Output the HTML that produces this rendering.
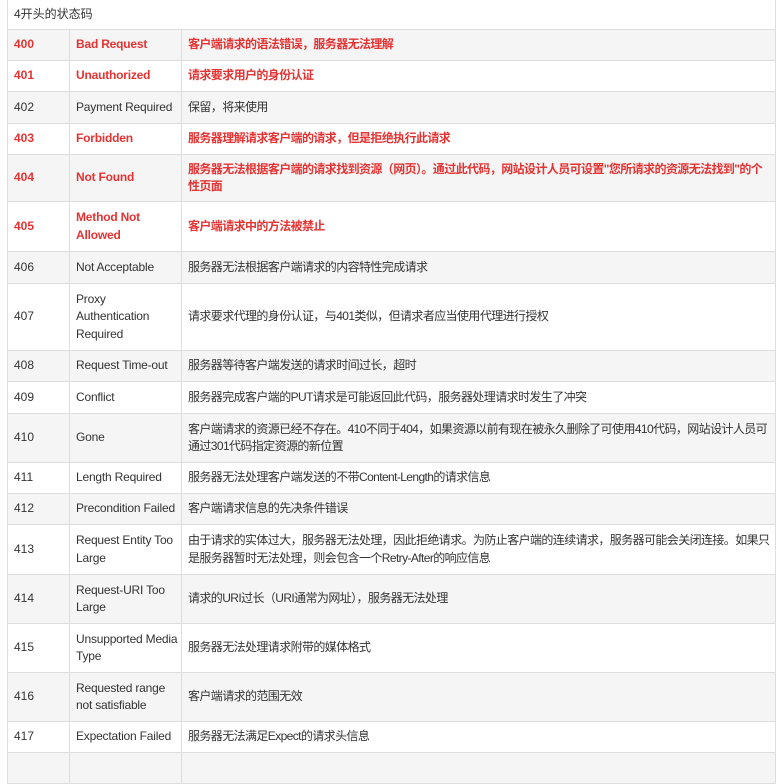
<!DOCTYPE html>
<html><head><meta charset="utf-8"><style>
body{margin:0;background:#fff;font-family:"Liberation Sans","Noto Sans CJK SC",sans-serif;font-size:12px;color:#333}
table{position:absolute;left:7px;top:-1px;width:769px;border-collapse:collapse;table-layout:fixed}
td{border:1px solid #ddd;padding:0 2px 0 6px;line-height:17.5px;vertical-align:middle;overflow:hidden;white-space:nowrap}
td:nth-child(2){letter-spacing:-0.2px}
td:nth-child(3){letter-spacing:-0.6px}
tr:nth-child(even) td{background:#f5f5f5}
tr:nth-child(odd) td{background:#fff}
.r td{color:#e53333;font-weight:bold}
</style></head><body>
<table>
<col style="width:62px"><col style="width:112px"><col>
<tr style="height:30px"><td colspan="3" style="letter-spacing:0">4开头的状态码</td></tr>
<tr class="r" style="height:31px"><td>400</td><td>Bad Request</td><td>客户端请求的语法错误，服务器无法理解</td></tr>
<tr class="r" style="height:31px"><td>401</td><td>Unauthorized</td><td>请求要求用户的身份认证</td></tr>
<tr style="height:32px"><td>402</td><td>Payment Required</td><td>保留，将来使用</td></tr>
<tr class="r" style="height:31px"><td>403</td><td>Forbidden</td><td>服务器理解请求客户端的请求，但是拒绝执行此请求</td></tr>
<tr class="r" style="height:47px"><td>404</td><td>Not Found</td><td>服务器无法根据客户端的请求找到资源（网页）。通过此代码，网站设计人员可设置"您所请求的资源无法找到"的个<br>性页面</td></tr>
<tr class="r" style="height:50px"><td>405</td><td>Method Not<br>Allowed</td><td>客户端请求中的方法被禁止</td></tr>
<tr style="height:32px"><td>406</td><td>Not Acceptable</td><td>服务器无法根据客户端请求的内容特性完成请求</td></tr>
<tr style="height:67px"><td>407</td><td>Proxy<br>Authentication<br>Required</td><td>请求要求代理的身份认证，与401类似，但请求者应当使用代理进行授权</td></tr>
<tr style="height:31px"><td>408</td><td>Request Time-out</td><td>服务器等待客户端发送的请求时间过长，超时</td></tr>
<tr style="height:32px"><td>409</td><td>Conflict</td><td>服务器完成客户端的PUT请求是可能返回此代码，服务器处理请求时发生了冲突</td></tr>
<tr style="height:49px"><td>410</td><td>Gone</td><td>客户端请求的资源已经不存在。410不同于404，如果资源以前有现在被永久删除了可使用410代码，网站设计人员可<br>通过301代码指定资源的新位置</td></tr>
<tr style="height:31px"><td>411</td><td>Length Required</td><td>服务器无法处理客户端发送的不带Content-Length的请求信息</td></tr>
<tr style="height:31px"><td>412</td><td>Precondition Failed</td><td>客户端请求信息的先决条件错误</td></tr>
<tr style="height:50px"><td>413</td><td>Request Entity Too<br>Large</td><td>由于请求的实体过大，服务器无法处理，因此拒绝请求。为防止客户端的连续请求，服务器可能会关闭连接。如果只<br>是服务器暂时无法处理，则会包含一个Retry-After的响应信息</td></tr>
<tr style="height:49px"><td>414</td><td>Request-URI Too<br>Large</td><td>请求的URI过长（URI通常为网址），服务器无法处理</td></tr>
<tr style="height:49px"><td>415</td><td>Unsupported Media<br>Type</td><td>服务器无法处理请求附带的媒体格式</td></tr>
<tr style="height:49px"><td>416</td><td>Requested range<br>not satisfiable</td><td>客户端请求的范围无效</td></tr>
<tr style="height:31px"><td>417</td><td>Expectation Failed</td><td>服务器无法满足Expect的请求头信息</td></tr>
<tr style="height:31px"><td></td><td></td><td></td></tr>
</table>
</body></html>
